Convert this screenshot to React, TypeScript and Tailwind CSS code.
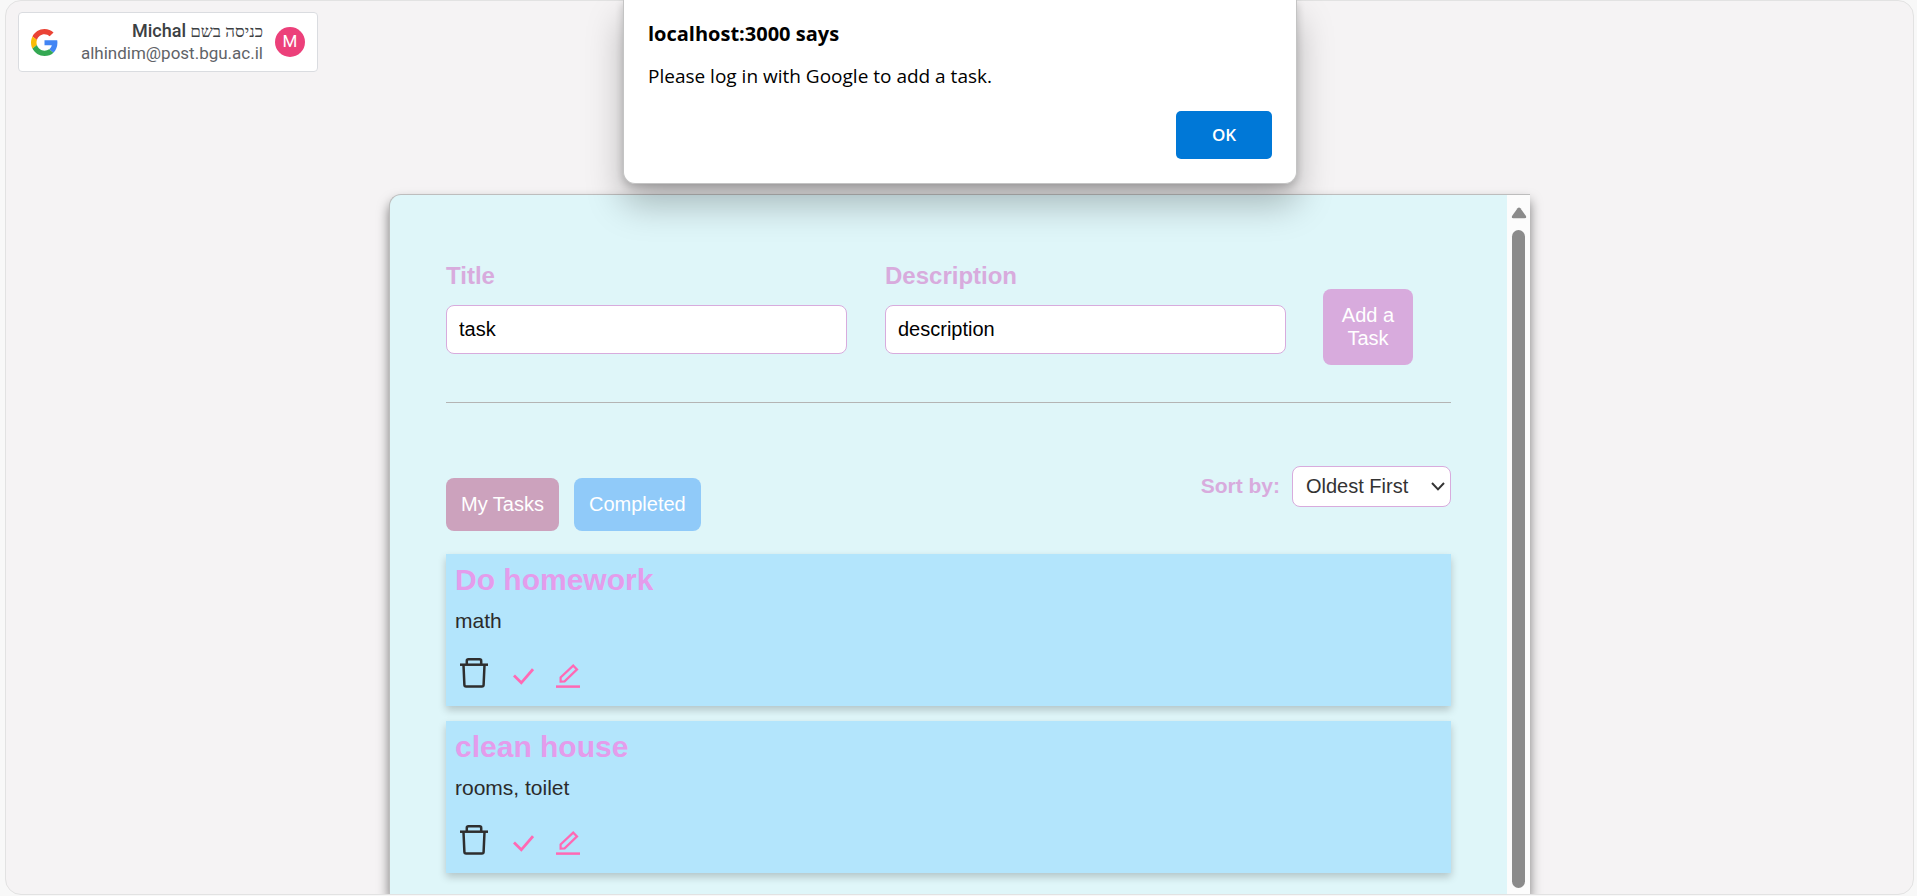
import { useState } from "react";

type Task = { title: string; description: string };

const tasks: Task[] = [
  { title: "Do homework", description: "math" },
  { title: "clean house", description: "rooms, toilet" },
];

function GoogleLogo() {
  return (
    <svg viewBox="0 0 48 48" className="size-[27px] shrink-0" aria-hidden="true">
      <path fill="#EA4335" d="M24 9.5c3.54 0 6.71 1.22 9.21 3.6l6.85-6.85C35.9 2.38 30.47 0 24 0 14.62 0 6.51 5.38 2.56 13.22l7.98 6.19C12.43 13.72 17.74 9.5 24 9.5z" />
      <path fill="#4285F4" d="M46.98 24.55c0-1.57-.15-3.09-.38-4.55H24v9.02h12.94c-.58 2.96-2.26 5.48-4.78 7.18l7.73 6c4.51-4.18 7.09-10.36 7.09-17.65z" />
      <path fill="#FBBC05" d="M10.53 28.59c-.48-1.45-.76-2.99-.76-4.59s.27-3.14.76-4.59l-7.98-6.19C.92 16.46 0 20.12 0 24c0 3.88.92 7.54 2.56 10.78l7.97-6.19z" />
      <path fill="#34A853" d="M24 48c6.48 0 11.93-2.13 15.89-5.81l-7.73-6c-2.15 1.45-4.92 2.3-8.16 2.3-6.26 0-11.57-4.22-13.47-9.91l-7.98 6.19C6.51 42.62 14.62 48 24 48z" />
    </svg>
  );
}

function TrashIcon() {
  return (
    <svg viewBox="0 0 28 30" className="h-[30px] w-7" fill="none" stroke="#2e2e2e" strokeWidth="2.500" strokeLinejoin="round" aria-hidden="true">
      <path d="M0 6.700h28" />
      <path d="M6.800 6.500V2.900q0-1.600 1.600-1.600h11.200q1.600 0 1.600 1.600v3.600" />
      <path d="M3.500 7l.9 20q.1 1.600 1.700 1.600h15.800q1.600 0 1.700-1.600l.9-20" />
    </svg>
  );
}

function CheckIcon() {
  return (
    <svg viewBox="0 0 21 17" className="h-[17px] w-[21px]" fill="none" stroke="#ff69b4" strokeWidth="2.800" aria-hidden="true">
      <path d="M1 7.600l7.300 7.200L20 1.200" />
    </svg>
  );
}

function EditIcon() {
  return (
    <svg viewBox="0 0 24 24" className="size-6" fill="none" stroke="#ff69b4" strokeWidth="2.200" aria-hidden="true">
      <path d="M0 22.600h24" strokeWidth="2.500" />
      <path d="M4.600 17.600v-4.200L17.200 1.600l3.800 3.800L8.600 17.400z" />
    </svg>
  );
}

function AccountCard() {
  return (
    <button type="button" className="flex h-[60px] w-[300px] items-center rounded border border-[#dadce0] bg-white px-3">
      <GoogleLogo />
      <span className="flex grow flex-col items-end pr-3 font-[Roboto,'Liberation_Serif',serif] text-[17px] leading-[22px]">
        <span dir="rtl" className="text-[#3c4043]">
          כניסה בשם <span className="text-[18px] font-medium">Michal</span>
        </span>
        <span className="text-[#5f6368]">alhindim@post.bgu.ac.il</span>
      </span>
      <span className="flex size-[30px] shrink-0 items-center justify-center rounded-full bg-[#ec407a] font-[Roboto,sans-serif] text-[17px] text-white">
        M
      </span>
    </button>
  );
}

function AlertDialog() {
  return (
    <div className="pointer-events-none absolute inset-x-0 top-0 flex justify-center pl-[3px]">
      <div
        role="alertdialog"
        aria-labelledby="alert-title"
        aria-describedby="alert-message"
        className="pointer-events-auto flex w-[674px] flex-col rounded-b-xl border-x border-b border-[#c4c4c4] bg-white px-6 pt-5 pb-6 font-['Open_Sans',sans-serif] text-black shadow-[0_20px_36px_rgba(0,0,0,0.26),0_3px_9px_rgba(0,0,0,0.2)]"
      >
        <h2 id="alert-title" className="text-[20px] leading-7 font-bold">localhost:3000 says</h2>
        <p id="alert-message" className="mt-4 text-[19px] leading-6">Please log in with Google to add a task.</p>
        <button type="button" className="mt-[23px] h-12 w-24 self-end rounded-[5px] bg-[#0078d7] text-[17px] font-semibold text-white">
          OK
        </button>
      </div>
    </div>
  );
}

function Field({ id, label, initial }: { id: string; label: string; initial: string }) {
  const [value, setValue] = useState(initial);
  return (
    <div className="flex w-[401px] flex-col">
      <label htmlFor={id} className="text-[24px] leading-7 font-bold text-[#d8abdd]">{label}</label>
      <input
        id={id}
        value={value}
        onChange={(e) => setValue(e.target.value)}
        className="mt-[15px] h-[49px] w-full rounded-lg border border-[#d8abdd] bg-white px-3 text-[20px] text-black outline-none"
      />
    </div>
  );
}

function TaskCard({ task }: { task: Task }) {
  return (
    <li className="bg-[#b3e5fc] px-[9px] pt-2 pb-[14px] shadow-[0_4px_8px_rgba(0,0,0,0.2)]">
      <h3 className="text-[30px] leading-9 font-bold text-[#e49ceb]">{task.title}</h3>
      <p className="mt-[11px] text-[21px] leading-6 text-[#2b2b2b]">{task.description}</p>
      <div className="mt-[25px] flex h-[34px] items-start pl-[5px]">
        <button type="button" aria-label="Delete task"><TrashIcon /></button>
        <button type="button" aria-label="Complete task" className="ml-[25px] pt-[10px]"><CheckIcon /></button>
        <button type="button" aria-label="Edit task" className="ml-[22px] pt-[6px]"><EditIcon /></button>
      </div>
    </li>
  );
}

function Scrollbar() {
  return (
    <div aria-hidden="true" className="flex w-[23px] shrink-0 flex-col items-center bg-[#fcfcfc] pt-3 pb-[6px]">
      <svg viewBox="0 0 16 12" className="h-3 w-4" fill="#8b8b8b">
        <path d="M6.600 1.200q1.400-1.600 2.800 0l5.400 7.600q1.200 2.400-1.200 2.400H2.400q-2.400 0-1.200-2.400z" />
      </svg>
      <div className="mt-[11px] w-[13px] grow rounded-full bg-[#8b8b8b]" />
    </div>
  );
}

export default function App() {
  const [order, setOrder] = useState("oldest");
  return (
    <div className="relative h-screen bg-[#f8f8f8] pr-[3px] pb-[1px] pl-[5px] font-['Liberation_Sans',sans-serif]">
      <div className="flex h-full flex-col overflow-hidden rounded-2xl border border-[#e2e2e2] bg-[#f5f3f4]">
        <header className="px-3 pt-[11px]">
          <AccountCard />
        </header>

        <main className="mx-auto mt-[122px] flex min-h-0 w-full max-w-[1141px] grow overflow-hidden rounded-tl-xl border-t border-l border-[#bdbdbd] bg-[#dff6f9] shadow-[0_7px_12px_rgba(0,0,0,0.5)]">
          <div className="grow overflow-hidden px-14 pt-[67px]">
            <form className="flex items-end gap-[37px] border-b border-[#b4b4b4] pb-9" onSubmit={(e) => e.preventDefault()}>
              <div className="flex gap-[38px] pb-3">
                <Field id="title" label="Title" initial="task" />
                <Field id="description" label="Description" initial="description" />
              </div>
              <button type="submit" className="mb-px h-[76px] w-[90px] rounded-lg bg-[#d8abdd] px-3 text-[20px] leading-[23px] text-white">
                Add a Task
              </button>
            </form>

            <div className="mt-[63px] flex items-start justify-between">
              <div className="flex gap-[15px] pt-3">
                <button type="button" className="h-[53px] rounded-lg bg-[#cca2bd] px-[15px] pb-[2px] text-[20px] text-white">My Tasks</button>
                <button type="button" className="h-[53px] rounded-lg bg-[#90caf9] px-[15px] pb-[2px] text-[20px] text-white">Completed</button>
              </div>
              <div className="flex items-center gap-3">
                <label htmlFor="sort" className="pb-[2px] text-[21px] font-bold text-[#d8abdd]">Sort by:</label>
                <div className="relative">
                  <select
                    id="sort"
                    value={order}
                    onChange={(e) => setOrder(e.target.value)}
                    className="h-[41px] w-[159px] appearance-none rounded-lg border border-[#d8abdd] bg-white pb-[2px] pl-[13px] text-[20px] text-[#333333]"
                  >
                    <option value="oldest">Oldest First</option>
                    <option value="newest">Newest First</option>
                  </select>
                  <svg viewBox="0 0 14 9" className="pointer-events-none absolute top-4 right-[6px] h-[9px] w-[14px]" fill="none" stroke="#333333" strokeWidth="2" aria-hidden="true">
                    <path d="M1 1l6 6.400L13 1" />
                  </svg>
                </div>
              </div>
            </div>

            <ul className="mt-[23px] flex flex-col gap-[15px]">
              {tasks.map((task) => (
                <TaskCard key={task.title} task={task} />
              ))}
            </ul>
          </div>
          <Scrollbar />
        </main>
      </div>
      <AlertDialog />
    </div>
  );
}
